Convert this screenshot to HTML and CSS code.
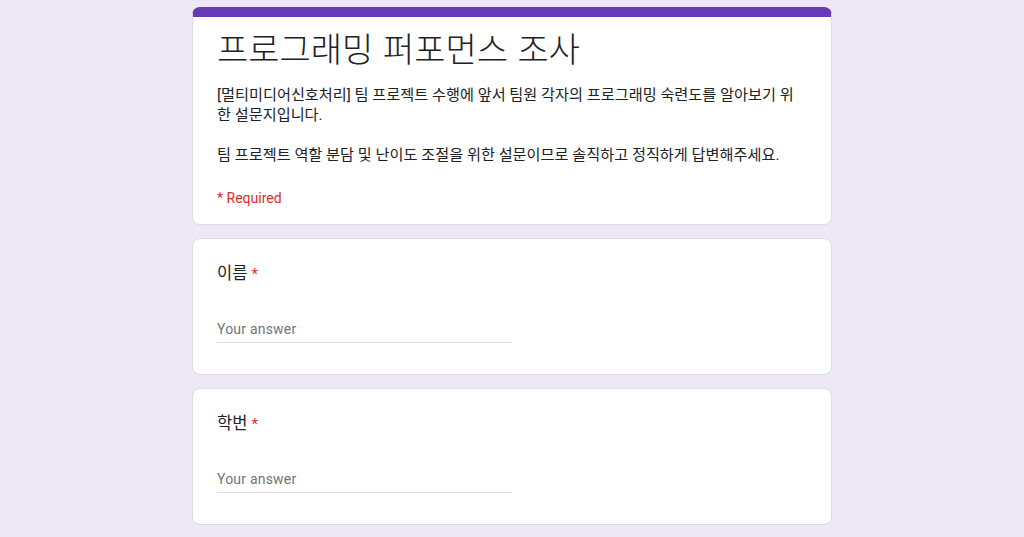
FILE: index.html
```html
<!DOCTYPE html>
<html lang="ko">
<head>
<meta charset="utf-8">
<title>프로그래밍 퍼포먼스 조사</title>
<link rel="stylesheet" href="styles.css">
</head>
<body>
<main class="form">
  <section class="card header-card">
    <h1 class="title">프로그래밍 퍼포먼스 조사</h1>
    <div class="desc">
      <p>[멀티미디어신호처리] 팀 프로젝트 수행에 앞서 팀원 각자의 프로그래밍 숙련도를 알아보기 위한 설문지입니다.</p>
      <p class="gap"></p>
      <p>팀 프로젝트 역할 분담 및 난이도 조절을 위한 설문이므로 솔직하고 정직하게 답변해주세요.</p>
    </div>
    <div class="required-note">* Required</div>
  </section>

  <section class="card question">
    <div class="label">이름 <span class="star">*</span></div>
    <div class="answer"><span class="placeholder">Your answer</span></div>
  </section>

  <section class="card question">
    <div class="label">학번 <span class="star">*</span></div>
    <div class="answer"><span class="placeholder">Your answer</span></div>
  </section>
</main>
</body>
</html>
```

FILE: styles.css
```css
html, body {
  margin: 0;
  padding: 0;
  background: #ede7f6;
  height: 100%;
  overflow: hidden;
}

body {
  font-family: Roboto, "Noto Sans CJK KR", sans-serif;
  color: #202124;
}

.form {
  width: 640px;
  margin: 0 auto;
  padding-top: 7px;
  display: flex;
  flex-direction: column;
  gap: 13px;
}

.card {
  background: #fff;
  border: 1px solid #dadce0;
  border-radius: 8px;
  box-sizing: border-box;
  padding: 0 24px;
}

.header-card {
  border-top: 10px solid #673ab7;
  padding-top: 11px;
  padding-bottom: 16px;
}

.title {
  margin: 0;
  font-family: "Noto Sans CJK KR", sans-serif;
  font-weight: 300;
  font-size: 34px;
  line-height: 40px;
  color: #202124;
}

.desc {
  margin-top: 17px;
  font-family: Roboto, "Noto Sans CJK KR", sans-serif;
  font-size: 15.2px;
  line-height: 20px;
  color: #202124;
}

.desc p {
  margin: 0;
}

.desc .gap {
  height: 20px;
}

.required-note {
  margin-top: 23px;
  font-size: 14px;
  line-height: 20px;
  color: #d93025;
}

.question {
  padding-top: 26px;
  padding-bottom: 31px;
}

.label {
  font-family: Roboto, "Noto Sans CJK KR", sans-serif;
  font-size: 16.5px;
  line-height: 18px;
  color: #202124;
}

.star {
  color: #d93025;
  font-size: 15px;
}

.answer {
  width: 50%;
  margin-top: 36px;
  padding-bottom: 3px;
  border-bottom: 1px solid #e0e0e0;
}

.placeholder {
  display: block;
  font-size: 14px;
  line-height: 20px;
  color: #70757a;
  letter-spacing: 0.2px;
}
```
